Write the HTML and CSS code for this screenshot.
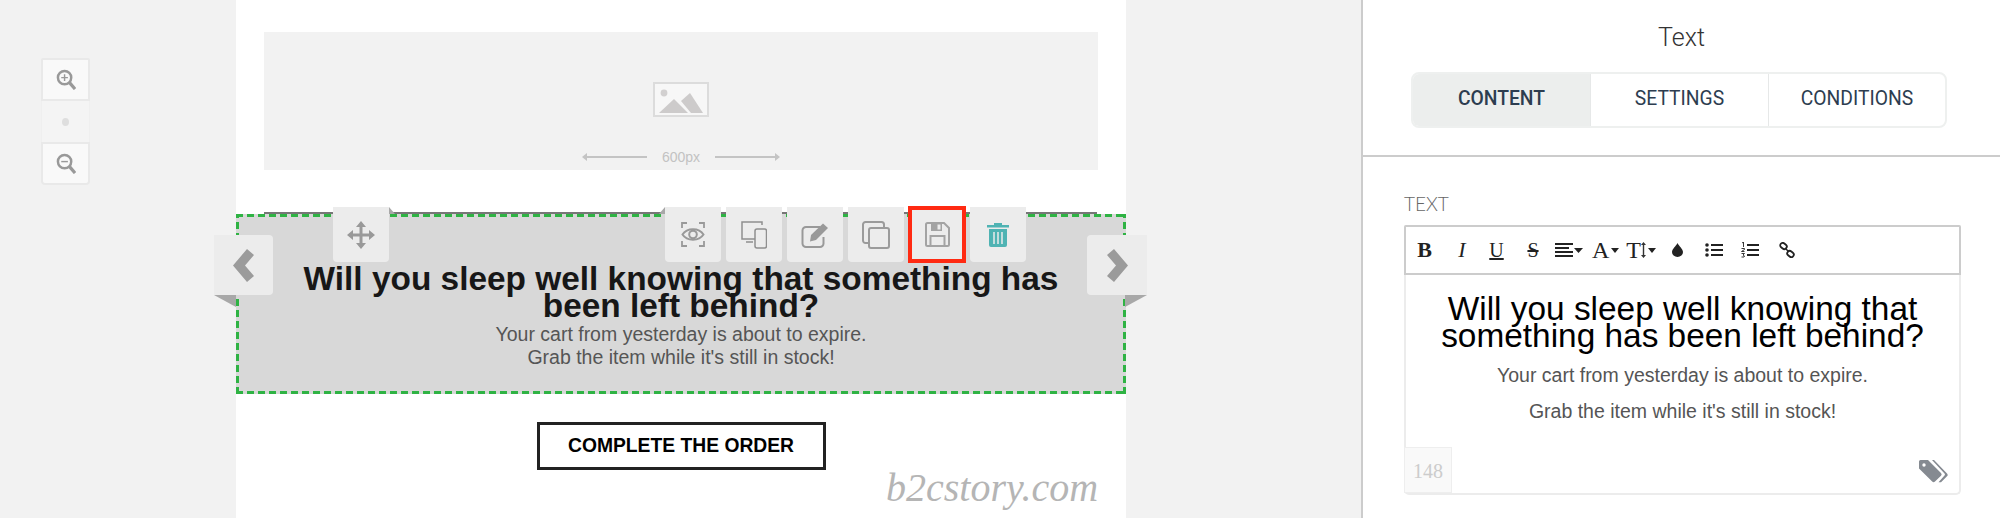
FILE: index.html
```html
<!DOCTYPE html>
<html lang="en">
<head>
    <meta charset="UTF-8">
    <title>Email editor - Text block</title>
    <link rel="stylesheet" href="styles.css">
</head>
<body>
    <main class="canvas">
        <div class="zoom-rail">
            <div class="zoom-controls">
                <button class="zoom-btn" type="button" aria-label="Zoom in">
                    <svg width="20" height="21" viewBox="0 0 21 22"><circle cx="9" cy="9" r="7" fill="none" stroke="#999" stroke-width="2.6"/><path d="M14 14l6 7" stroke="#999" stroke-width="3.4"/><path d="M5.5 9h7M9 5.5v7" stroke="#999" stroke-width="1.5"/></svg>
                </button>
                <div class="zoom-level"><span class="zoom-dot"></span></div>
                <button class="zoom-btn zoom-btn-last" type="button" aria-label="Zoom out">
                    <svg width="20" height="21" viewBox="0 0 21 22"><circle cx="9" cy="9" r="7" fill="none" stroke="#999" stroke-width="2.6"/><path d="M14 14l6 7" stroke="#999" stroke-width="3.4"/><path d="M5.5 9h7" stroke="#999" stroke-width="1.5"/></svg>
                </button>
            </div>
        </div>

        <div class="email">
            <div class="image-holder">
                <svg class="image-icon" width="56" height="35" viewBox="0 0 56 35">
                    <rect x="1" y="1" width="54" height="33" fill="#f7f7f7" stroke="#dcdcdc" stroke-width="2"/>
                    <circle cx="11" cy="11" r="3.4" fill="#d2d0d0"/>
                    <path d="M6 31L21 17l14 14z" fill="#cdcbcb"/>
                    <path d="M28 19l9-8 13 20H38z" fill="#cdcbcb"/>
                </svg>
                <div class="ruler">
                    <svg width="66" height="10" viewBox="0 0 66 10"><path d="M0 5l5-4v3h60v2H5v3z" fill="#c4c4c4"/></svg>
                    <span>600px</span>
                    <svg width="66" height="10" viewBox="0 0 66 10"><path d="M66 5l-5-4v3H1v2h60v3z" fill="#c4c4c4"/></svg>
                </div>
            </div>

            <section class="text-block">
                <h2>Will you sleep well knowing that something has been left behind?</h2>
                <p>Your cart from yesterday is about to expire.<br>Grab the item while it's still in stock!</p>

                <div class="handle move-handle">
                    <svg width="28" height="28" viewBox="0 0 28 28"><path d="M14 0l5 6h-3.500v6.500H22V9l6 5-6 5v-3.500h-6.500V22H19l-5 6-5-6h3.500v-6.500H6V19l-6-5 6-5v3.500h6.500V6H9z" fill="#999"/></svg>
                </div>
                <div class="actions">
                    <div class="handle">
                        <svg width="24" height="25" viewBox="0 0 24 25" fill="none" stroke="#999"><path d="M1 6V1h5M18 1h5v5M1 19v5h5M23 19v5h-5" stroke-width="1.800"/><path d="M1.500 12.500C6 5.500 18 5.500 22.500 12.500 18 19.500 6 19.500 1.500 12.500z" stroke-width="2"/><circle cx="12" cy="12.500" r="3.800" stroke-width="2"/></svg>
                    </div>
                    <div class="handle">
                        <svg width="26" height="28" viewBox="0 0 26 28" fill="none" stroke="#8f8f8f" stroke-width="1.500"><path d="M21 4V1H1v17h13M5 21h7"/><rect x="14" y="8" width="11.500" height="19" rx="2"/></svg>
                    </div>
                    <div class="handle">
                        <svg width="28" height="26" viewBox="0 0 28 26"><path d="M19 5H5a3.500 3.500 0 0 0-3.500 3.500v13A3.500 3.500 0 0 0 5 25h14a3.500 3.500 0 0 0 3.500-3.500V15" fill="none" stroke="#999" stroke-width="2"/><path d="M10 13L22 1.500l5 4.500L15 18l-6 1.500z" fill="#999"/></svg>
                    </div>
                    <div class="handle">
                        <svg width="28" height="28" viewBox="0 0 28 28" fill="none" stroke="#9b9b9b" stroke-width="2"><path d="M22 6V3.500A2.500 2.500 0 0 0 19.500 1h-16A2.500 2.500 0 0 0 1 3.500v16A2.500 2.500 0 0 0 3.500 22H6"/><rect x="7" y="7" width="20" height="20" rx="2"/></svg>
                    </div>
                    <div class="handle handle-active">
                        <svg width="25" height="25" viewBox="0 0 25 25"><path d="M2.500 1H19l5 5v16.500a1.500 1.500 0 0 1-1.500 1.500h-20A1.500 1.500 0 0 1 1 22.500v-20A1.500 1.500 0 0 1 2.500 1z" fill="none" stroke="#a3a3a3" stroke-width="2"/><path d="M6 1h11v8H6z" fill="#a3a3a3"/><rect x="12.500" y="2.500" width="3" height="5" fill="#ececec"/><rect x="5.500" y="14" width="14" height="10" fill="none" stroke="#a3a3a3" stroke-width="2"/></svg>
                    </div>
                    <div class="handle">
                        <svg width="22" height="25" viewBox="0 0 22 25"><path d="M7 3V1h8v2h7v2.500H0V3z" fill="#4fb3b3"/><path d="M2 7h18v16a2 2 0 0 1-2 2H4a2 2 0 0 1-2-2z" fill="#4fb3b3"/><path d="M7 10v12M11 10v12M15 10v12" stroke="#ececec" stroke-width="1.500"/></svg>
                    </div>
                </div>
                <div class="nav-arrow nav-prev">
                    <svg width="21" height="33" viewBox="0 0 21 33"><path d="M14 0L0 16.500 14 33l7-6-9-10.500L21 6z" fill="#9b9b9b"/></svg>
                </div>
                <div class="nav-arrow nav-next">
                    <svg width="21" height="33" viewBox="0 0 21 33"><path d="M7 0l14 16.500L7 33l-7-6 9-10.500L0 6z" fill="#9b9b9b"/></svg>
                </div>
            </section>

            <div class="cta-row">
                <a class="cta" href="#">COMPLETE THE ORDER</a>
            </div>
        </div>
        <div class="watermark">b2cstory.com</div>
    </main>

    <aside class="panel">
        <header class="panel-head">
            <h1>Text</h1>
            <div class="tabs">
                <div class="tab tab-active">CONTENT</div>
                <div class="tab">SETTINGS</div>
                <div class="tab">CONDITIONS</div>
            </div>
        </header>
        <div class="panel-body">
            <div class="field-label">TEXT</div>
            <div class="editor">
                <div class="editor-tools">
                    <span class="tool tool-b">B</span>
                    <span class="tool tool-i">I</span>
                    <span class="tool tool-u">U</span>
                    <span class="tool tool-s">S</span>
                    <span class="tool tool-align">
                        <svg width="28" height="14" viewBox="0 0 28 14"><path d="M0 1h18M0 5h14M0 9h18M0 13h18" stroke="#222" stroke-width="1.800"/><path d="M19 5h9l-4.500 5z" fill="#222"/></svg>
                    </span>
                    <span class="tool tool-a">A<i class="caret"></i></span>
                    <span class="tool tool-t">T<svg width="5" height="16" viewBox="0 0 5 16"><path d="M2.500 0L5 3H3.200v10H5l-2.500 3L0 13h1.800V3H0z" fill="#333"/></svg><i class="caret"></i></span>
                    <span class="tool tool-drop">
                        <svg width="11" height="14" viewBox="0 0 11 14"><path d="M5.500 0C7 3 11 6 11 9a5.500 5 0 0 1-11 0C0 6 4 3 5.500 0z" fill="#222"/></svg>
                    </span>
                    <span class="tool tool-ul">
                        <svg width="18" height="14" viewBox="0 0 18 14"><circle cx="2" cy="2" r="1.800" fill="#222"/><circle cx="2" cy="7" r="1.800" fill="#222"/><circle cx="2" cy="12" r="1.800" fill="#222"/><path d="M6 2h12M6 7h12M6 12h12" stroke="#222" stroke-width="1.800"/></svg>
                    </span>
                    <span class="tool tool-ol">
                        <svg width="18" height="16" viewBox="0 0 18 16"><path d="M1 1l1.500-1v5M.5 6.500h3v1l-3 2h3M.5 11.500h3l-1.500 1.500 1.500 1-.5 1H.5" fill="none" stroke="#222" stroke-width=".9"/><path d="M6 3h12M6 8h12M6 13h12" stroke="#222" stroke-width="1.800"/></svg>
                    </span>
                    <span class="tool tool-link">
                        <svg width="16" height="16" viewBox="0 0 16 16" fill="none" stroke="#222" stroke-width="1.800"><rect x="1" y="1.500" width="7" height="5" rx="2.500" transform="rotate(40 4.500 4)"/><rect x="8" y="9.500" width="7" height="5" rx="2.500" transform="rotate(40 11.500 12)"/><path d="M6 6l4 4" stroke-width="1.500"/></svg>
                    </span>
                </div>
                <div class="editor-body">
                    <h3>Will you sleep well knowing that something has been left behind?</h3>
                    <p>Your cart from yesterday is about to expire.</p>
                    <p>Grab the item while it's still in stock!</p>
                </div>
                <div class="editor-foot">
                    <span class="counter">148</span>
                    <svg class="tag-icon" width="30" height="24" viewBox="0 0 30 24"><path d="M1 2.500A1.500 1.500 0 0 1 2.500 1h7.500l13 13a2 2 0 0 1 0 2.800L17 22.500a2 2 0 0 1-2.800 0L1 9.500z" fill="#858a91"/><path d="M14 1h2l13 13.500a2 2 0 0 1 0 2.800l-6 6h-2.500l6-6.800a1.500 1.500 0 0 0 0-2z" fill="#858a91"/><circle cx="6" cy="6" r="1.700" fill="#fff"/></svg>
                </div>
            </div>
        </div>
    </aside>
</body>
</html>
```

FILE: styles.css
```css
/* Page frame */
html, body {
    height: 100%;
}

body {
    margin: 0;
    height: 518px;
    overflow: hidden;
    display: flex;
    font-family: "Liberation Sans", Arial, sans-serif;
    background: #f2f2f2;
}

.canvas {
    position: relative;
    flex: 0 0 1361px;
    display: flex;
    overflow: hidden;
}

/* Zoom buttons */
.zoom-rail {
    flex: 0 0 236px;
    padding: 58px 0 0 41px;
    box-sizing: border-box;
}

.zoom-controls {
    width: 49px;
}

.zoom-btn {
    display: flex;
    align-items: center;
    justify-content: center;
    width: 49px;
    height: 43px;
    padding: 0;
    background: #f9f9f9;
    border: 2px solid #e9e9e9;
    border-radius: 2px 2px 0 0;
}

.zoom-btn-last {
    height: 43px;
    border-radius: 0 0 4px 4px;
    border-bottom-width: 2px;
}

.zoom-level {
    display: flex;
    align-items: center;
    justify-content: center;
    height: 41px;
    box-sizing: border-box;
    background: #f4f4f4;
    border-left: 1px solid #efefef;
    border-right: 1px solid #efefef;
}

.zoom-dot {
    width: 7px;
    height: 8px;
    border-radius: 50%;
    background: #dedede;
}

/* Email preview */
.email {
    flex: 0 0 890px;
    background: #fff;
}

.image-holder {
    display: flex;
    flex-direction: column;
    align-items: center;
    height: 138px;
    margin: 32px 28px 0;
    padding-top: 50px;
    box-sizing: border-box;
    background: #f2f2f2;
}

.ruler {
    display: flex;
    align-items: center;
    gap: 14px;
    margin-top: 32px;
    font-size: 14px;
    color: #c2c2c2;
}

/* dashes drawn with gradients, a css dashed border comes out too short */
.text-block {
    position: relative;
    height: 180px;
    margin-top: 44px;
    padding-top: 51px;
    box-sizing: border-box;
    background-color: #d8d8d8;
    background-image:
        repeating-linear-gradient(90deg, #2fb344 0 7px, transparent 7px 11px),
        repeating-linear-gradient(90deg, #2fb344 0 7px, transparent 7px 11px),
        repeating-linear-gradient(0deg, #2fb344 0 7px, transparent 7px 11px),
        repeating-linear-gradient(0deg, #2fb344 0 7px, transparent 7px 11px);
    background-size: 100% 3px, 100% 3px, 3px 100%, 3px 100%;
    background-position: 0 0, 0 100%, 0 0, 100% 0;
    background-repeat: no-repeat;
    text-align: center;
}

.text-block::before {
    content: "";
    position: absolute;
    top: -2px;
    left: 28px;
    right: 29px;
    height: 2px;
    background: #777;
}

.text-block h2 {
    margin: 0 auto;
    width: 790px;
    font-size: 33.4px;
    line-height: 27px;
    color: #171717;
}

.text-block p {
    margin: 4px 0 0;
    font-size: 19.5px;
    line-height: 23px;
    color: #555;
}

/* Floating block handles */
.handle {
    display: flex;
    align-items: center;
    justify-content: center;
    flex: 0 0 56px;
    height: 55px;
    background: #ececec;
    border-radius: 0 0 4px 4px;
}

.handle-active {
    border-radius: 0;
    outline: 4px solid #ff2a12;
    outline-offset: -3px;
}

.move-handle {
    position: absolute;
    top: -7px;
    left: 97px;
    width: 56px;
}

.move-handle::after,
.actions::before {
    content: "";
    position: absolute;
    top: 0;
    border-bottom: 7px solid #a8a8a8;
}

.move-handle::after {
    left: 56px;
    border-right: 6px solid transparent;
}

.actions {
    position: absolute;
    top: -7px;
    left: 428.5px;
    display: flex;
    gap: 5.2px;
}

.actions::before {
    left: -6px;
    border-left: 6px solid transparent;
}

.nav-arrow {
    position: absolute;
    top: 21px;
    display: flex;
    align-items: center;
    justify-content: center;
    height: 60px;
    background: #ececec;
}

.nav-arrow::after {
    content: "";
    position: absolute;
    top: 60px;
    border-top: 12px solid #a8a8a8;
}

.nav-prev {
    left: -22px;
    width: 59px;
    border-radius: 0 4px 4px 0;
}

.nav-prev::after {
    left: 0;
    border-left: 22px solid transparent;
}

.nav-next {
    right: -21px;
    width: 60px;
    border-radius: 4px 0 0 4px;
}

.nav-next::after {
    right: 0;
    border-right: 22px solid transparent;
}

.cta-row {
    display: flex;
    justify-content: center;
    padding-top: 28px;
}

.cta {
    display: block;
    width: 289px;
    height: 48px;
    box-sizing: border-box;
    border: 3px solid #222;
    font-size: 19.3px;
    font-weight: bold;
    line-height: 42px;
    text-align: center;
    color: #000;
    text-decoration: none;
}

.watermark {
    position: absolute;
    left: 886px;
    top: 466px;
    font-family: "Liberation Serif", serif;
    font-style: italic;
    font-size: 40px;
    line-height: 44px;
    color: #b5b5b5;
}

/* Right panel */
.panel {
    flex: 1;
    background: #fff;
    border-left: 2px solid #ccc;
    box-sizing: border-box;
}

.panel-head {
    height: 157px;
    padding-top: 21px;
    box-sizing: border-box;
    border-bottom: 2px solid #ccc;
    text-align: center;
}

.panel-head h1 {
    margin: 0;
    font-family: Roboto, sans-serif;
    font-size: 25px;
    font-weight: 300;
    line-height: 34px;
    color: #333;
}

.tabs {
    display: flex;
    width: 536px;
    height: 56px;
    margin: 17px 0 0 48px;
    box-sizing: border-box;
    border: 2px solid #eef0ef;
    border-radius: 8px;
    overflow: hidden;
}

.tab {
    flex: 0 0 178px;
    font-family: Roboto, sans-serif;
    font-size: 19.3px;
    line-height: 50px;
    color: #2d3d50;
    border-right: 1px solid #e6e8e8;
    box-sizing: border-box;
}

.tab:last-child {
    flex: 1;
    border-right: none;
}

.tab-active {
    background: #eceeed;
    font-weight: 500;
}

.panel-body {
    padding: 36px 39px 0 41px;
}

.field-label {
    font-family: Lato, sans-serif;
    font-size: 19px;
    font-weight: 300;
    line-height: 21px;
    color: #666;
    margin-bottom: 11px;
}

.editor {
    height: 270px;
    display: flex;
    flex-direction: column;
    box-sizing: border-box;
    border: 2px solid #ececec;
    border-top: none;
    border-radius: 2px 2px 5px 5px;
}

.editor-tools {
    position: relative;
    display: flex;
    flex: 0 0 50px;
    align-items: center;
    margin: 0 -2px;
    box-sizing: border-box;
    border: 2px solid #ccc;
    border-radius: 2px 2px 0 0;
    font-family: "Liberation Serif", serif;
    color: #222;
}

.tool {
    display: flex;
    align-items: center;
    justify-content: center;
    flex: 0 0 auto;
    font-size: 20px;
    line-height: 24px;
}

.tool-b {
    width: 15px;
    margin-left: 11px;
    font-weight: bold;
    font-size: 22px;
}

.tool-i {
    width: 10px;
    margin-left: 25px;
    font-style: italic;
    font-size: 22px;
}

.tool-u {
    width: 15px;
    margin-left: 22px;
    font-size: 20px;
    text-decoration: underline;
}

.tool-s {
    width: 18px;
    margin-left: 20px;
    font-size: 20px;
    text-decoration: line-through;
}

.tool-align {
    margin-left: 13px;
}

.tool-a {
    margin-left: 9px;
    font-size: 24px;
}

.tool-t {
    margin-left: 7px;
    font-size: 24px;
}

.caret {
    width: 0;
    height: 0;
    margin-left: 2px;
    border-top: 5px solid #222;
    border-left: 4.5px solid transparent;
    border-right: 4.5px solid transparent;
}

.tool-drop {
    margin-left: 16px;
}

.tool-ul {
    margin-left: 22px;
}

.tool-ol {
    margin-left: 18px;
}

.tool-link {
    margin-left: 20px;
}

.editor-body {
    flex: 1;
    padding-top: 20px;
    font-family: "Liberation Sans", Arial, sans-serif;
    text-align: center;
}

.editor-body h3 {
    margin: 0 0 8px;
    font-size: 33.4px;
    font-weight: normal;
    line-height: 27px;
    color: #000;
}

.editor-body p {
    margin: 0;
    font-size: 19.5px;
    line-height: 36px;
    color: #555;
}

.editor-foot {
    display: flex;
    justify-content: space-between;
    align-items: flex-start;
    height: 46px;
}

.counter {
    width: 48px;
    height: 46px;
    margin-left: -2px;
    box-sizing: border-box;
    background: #f9f9f9;
    border: 1px solid #eee;
    font-family: "Liberation Serif", serif;
    font-size: 20px;
    line-height: 46px;
    text-align: center;
    color: #ccc;
}

.tag-icon {
    margin: 12px 11px 0 0;
}
```
